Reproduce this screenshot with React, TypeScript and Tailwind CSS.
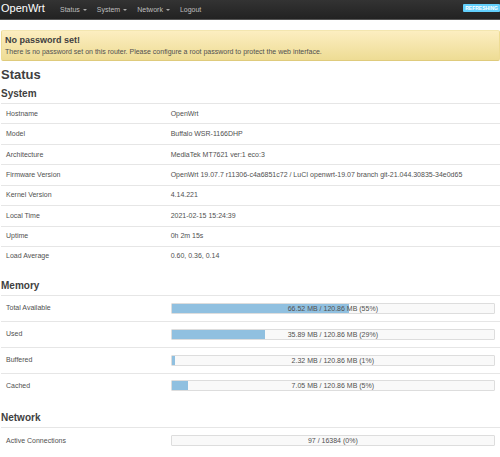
const menus = [
  { label: "Status", dropdown: true },
  { label: "System", dropdown: true },
  { label: "Network", dropdown: true },
  { label: "Logout", dropdown: false },
];

const system = [
  ["Hostname", "OpenWrt"],
  ["Model", "Buffalo WSR-1166DHP"],
  ["Architecture", "MediaTek MT7621 ver:1 eco:3"],
  [
    "Firmware Version",
    "OpenWrt 19.07.7 r11306-c4a6851c72 / LuCI openwrt-19.07 branch git-21.044.30835-34e0d65",
  ],
  ["Kernel Version", "4.14.221"],
  ["Local Time", "2021-02-15 15:24:39"],
  ["Uptime", "0h 2m 15s"],
  ["Load Average", "0.60, 0.36, 0.14"],
];

const memory = [
  { label: "Total Available", text: "66.52 MB / 120.86 MB (55%)", percent: 55 },
  { label: "Used", text: "35.89 MB / 120.86 MB (29%)", percent: 29 },
  { label: "Buffered", text: "2.32 MB / 120.86 MB (1%)", percent: 1 },
  { label: "Cached", text: "7.05 MB / 120.86 MB (5%)", percent: 5 },
];

const network = [
  { label: "Active Connections", text: "97 / 16384 (0%)", percent: 0 },
];

type Meter = { label: string; text: string; percent: number };

const Navbar = () => {
  return (
    <header className="flex h-5 items-center border-b border-[#555] bg-linear-to-b from-[#333] to-[#222] pl-px">
      <a href="#" className="w-[59px] pb-1 text-[11px] leading-4 text-white">
        OpenWrt
      </a>
      <nav className="flex flex-1 gap-[10px] text-[7px] leading-4 text-[#bfbfbf]">
        {menus.map((menu) => (
          <a key={menu.label} href="#" className="flex items-center gap-[3px]">
            {menu.label}
            {menu.dropdown && (
              <span className="border-x-2 border-t-2 border-x-transparent border-t-[#aaa]" />
            )}
          </a>
        ))}
      </nav>
      <button
        type="button"
        className="mb-1 h-2 rounded-[1px] bg-[#62cffc] px-[2px] text-[5px] leading-2 font-bold text-white"
      >
        REFRESHING
      </button>
    </header>
  );
};

const Title = ({ children }: { children: string }) => {
  return (
    <h3 className="h-[19px] text-[10px] leading-[19px] font-bold text-[#404040]">
      {children}
    </h3>
  );
};

const MeterTable = ({ rows, className }: { rows: Meter[]; className: string }) => {
  return (
    <table className={`w-full table-fixed ${className}`}>
      <tbody>
        {rows.map((row) => (
          <tr key={row.label} className="border-t border-[#e6e6e6]">
            <th scope="row" className="w-[33%] pl-[5px] text-left font-normal">
              {row.label}
            </th>
            <td className="pl-[5px] pr-[5px]">
              <div className="grid h-[11px] rounded-[1px] border border-[#ddd] bg-[#f9f9f9]">
                <div
                  className="col-start-1 row-start-1 bg-[#90c0e0]"
                  style={{ width: `${row.percent}%` }}
                />
                <span className="col-start-1 row-start-1 text-center leading-[9px]">
                  {row.text}
                </span>
              </div>
            </td>
          </tr>
        ))}
      </tbody>
    </table>
  );
};

const App = () => {
  return (
    <div className="bg-white font-['Liberation_Sans',Arial,sans-serif] text-[7px] leading-[10px] text-[#505050]">
      <Navbar />
      <main className="pl-px pt-[10px] pb-2">
        <div className="rounded-[2px] border border-[#eedc94] border-t-[#f3e6b0] border-b-[#dfcb7c] bg-linear-to-b from-[#fceec1] to-[#eedc94] px-[3px] pt-[3px] pb-[3px]">
          <h4 className="text-[9px] leading-3 font-bold text-[#404040]">
            No password set!
          </h4>
          <p className="leading-[11px]">
            There is no password set on this router. Please configure a root
            password to protect the web interface.
          </p>
        </div>
        <h2 className="mt-1 h-[19px] text-[13px] leading-[19px] font-bold text-[#404040]">
          Status
        </h2>
        <Title>System</Title>
        <table className="h-[163px] w-full table-fixed">
          <tbody>
            {system.map(([label, value]) => (
              <tr key={label} className="border-t border-[#e6e6e6]">
                <th
                  scope="row"
                  className="w-[33%] pl-[5px] text-left font-normal"
                >
                  {label}
                </th>
                <td className="pl-[5px]">{value}</td>
              </tr>
            ))}
          </tbody>
        </table>
        <div className="mt-[10px]">
          <Title>Memory</Title>
          <MeterTable rows={memory} className="h-[103px]" />
        </div>
        <div className="mt-[10px]">
          <Title>Network</Title>
          <MeterTable rows={network} className="h-[26px]" />
        </div>
      </main>
    </div>
  );
};

export default App;
